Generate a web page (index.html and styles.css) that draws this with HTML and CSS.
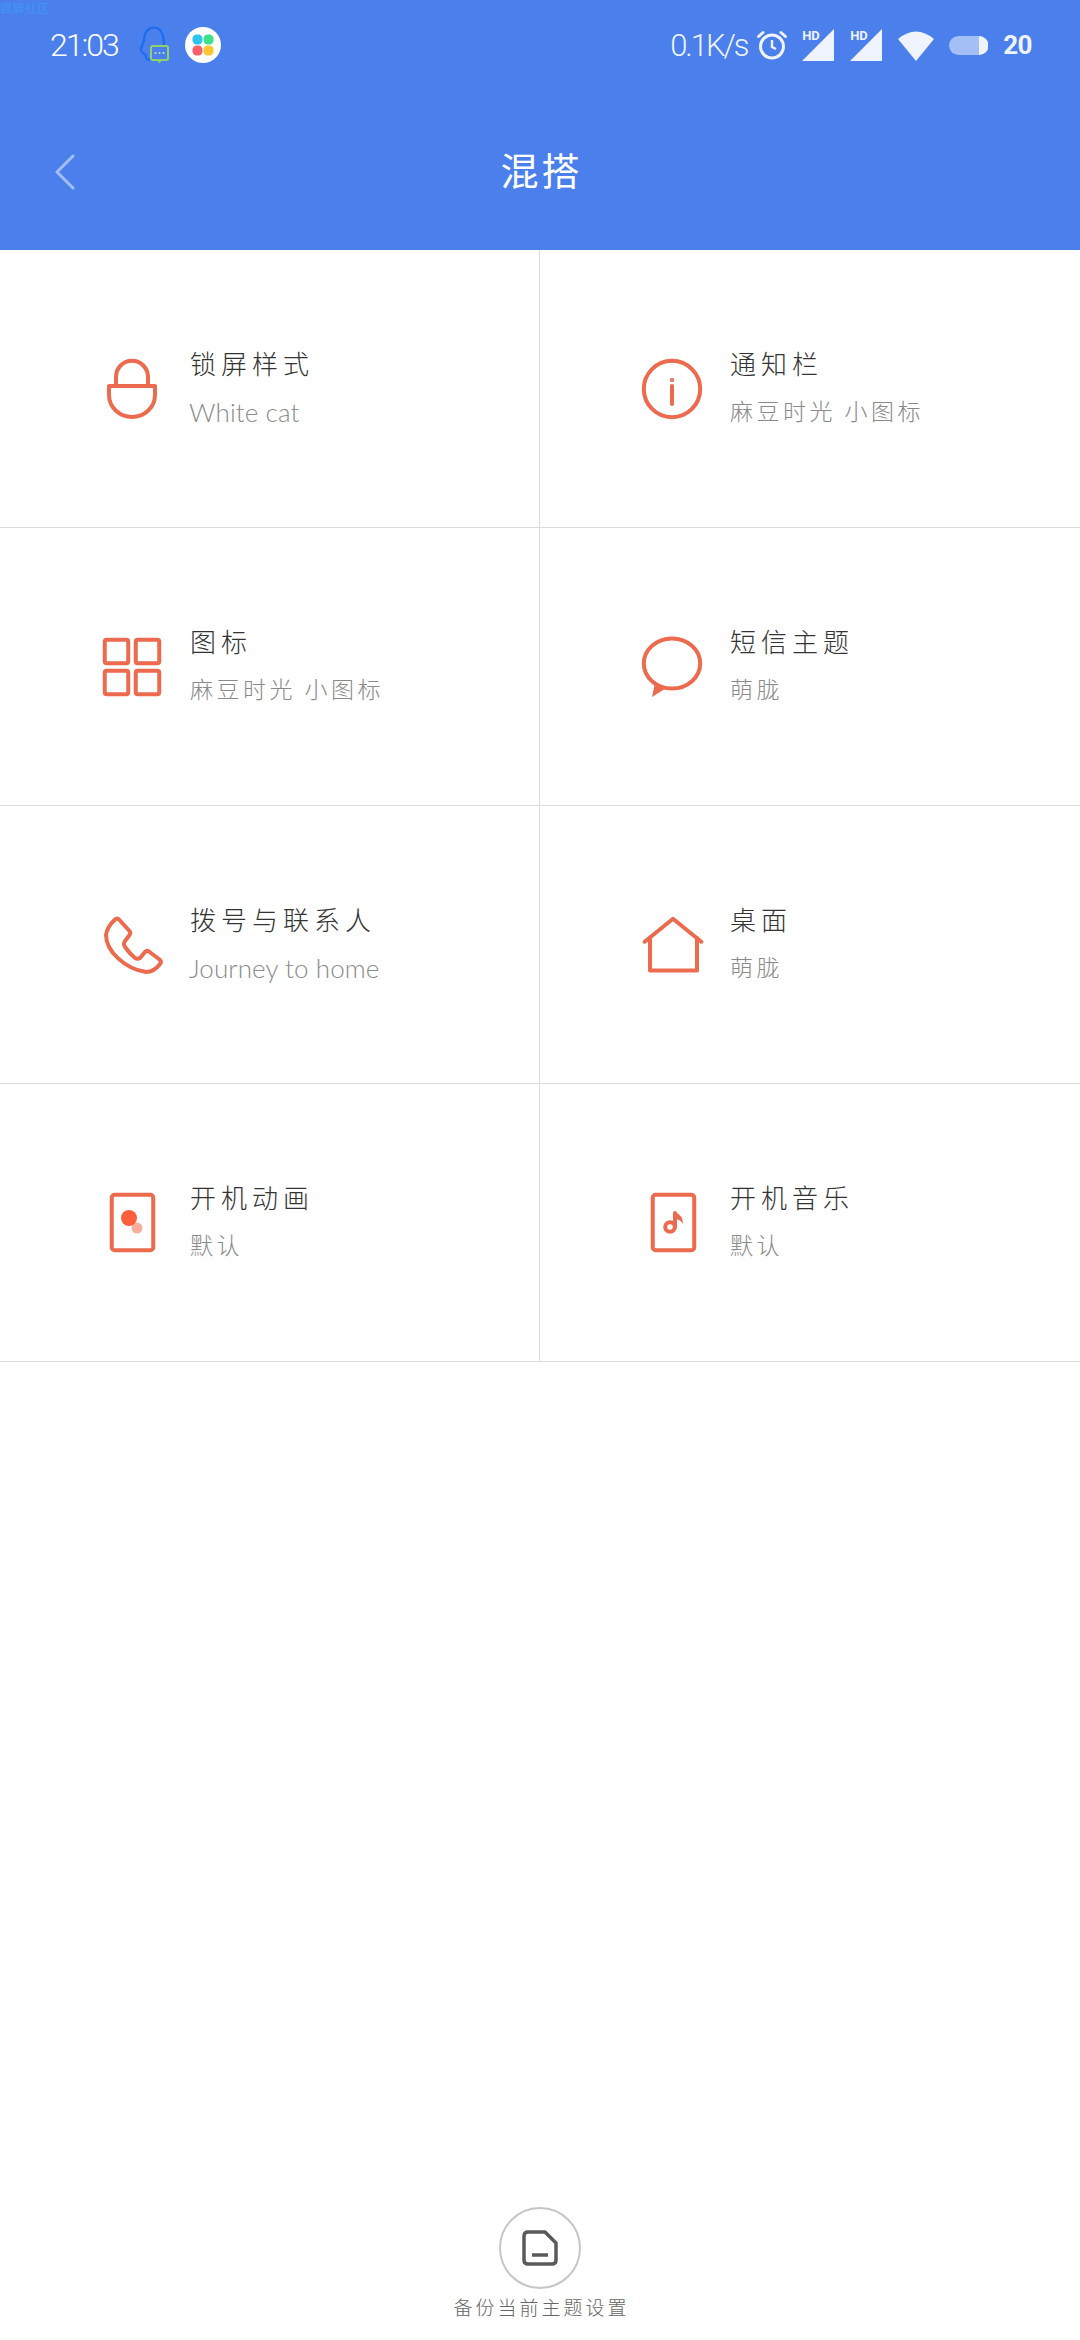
FILE: index.html
```html
<!DOCTYPE html>
<html lang="zh-CN">
<head>
<meta charset="utf-8">
<title>混搭</title>
<link rel="stylesheet" href="styles.css">
</head>
<body>
<div class="app">
  <header class="top">
    <div class="mark">锦屏社区</div>
    <div class="status">
      <div class="status-left">
        <span class="time">21:03</span>
        <svg class="qq" width="32" height="38" viewBox="0 0 32 38"><path d="M12 34C8 34 6 32 7 29C3 27 1 25 2 22C3 19 5 17 5 14C5 6 10 1.500 15 1.500C21 1.500 24 7 25 15V21" fill="none" stroke="#1a6df0" stroke-width="2.200" stroke-linecap="round" stroke-linejoin="round"/><rect x="12" y="20" width="17" height="14" rx="1.500" fill="#4a7fec" stroke="#8fd06a" stroke-width="2"/><path d="M18 34l2.500 3.500 2.500-3.500z" fill="#8fd06a"/><circle cx="16.500" cy="27" r="1.100" fill="#b4e0a8"/><circle cx="20.500" cy="27" r="1.100" fill="#b4e0a8"/><circle cx="24.500" cy="27" r="1.100" fill="#b4e0a8"/></svg>
        <svg class="clover" width="36" height="36" viewBox="0 0 36 36"><circle cx="18" cy="18" r="18" fill="#fff"/><rect x="7.500" y="7.500" width="10" height="10" rx="4.200" fill="#2bc5ee"/><rect x="18.500" y="7.500" width="10" height="10" rx="4.200" fill="#3fe08a"/><rect x="7.500" y="18.500" width="10" height="10" rx="4.200" fill="#f9606a"/><rect x="18.500" y="18.500" width="10" height="10" rx="4.200" fill="#fdc52f"/></svg>
      </div>
      <div class="status-right">
        <span class="speed">0.1K/s</span>
        <svg class="alarm" width="30" height="30" viewBox="0 0 30 30"><circle cx="15" cy="16.500" r="11.500" fill="none" stroke="#eef3fd" stroke-width="3"/><path d="M15 10v7l4 2" fill="none" stroke="#eef3fd" stroke-width="2.400"/><path d="M1.500 6.500L6 2.500M28.500 6.500L24 2.500" stroke="#eef3fd" stroke-width="3" stroke-linecap="round"/></svg>
        <span class="sig"><b class="hd">HD</b><svg width="32" height="32" viewBox="0 0 32 32"><path d="M32 0V32H0z" fill="#eef3fd"/></svg></span>
        <span class="sig"><b class="hd">HD</b><svg width="32" height="32" viewBox="0 0 32 32"><path d="M32 0V32H0z" fill="#eef3fd"/></svg></span>
        <svg class="wifi" width="36" height="31" viewBox="0 0 36 31"><path d="M0 9Q18-6 36 9L18 31z" fill="#eef3fd"/></svg>
        <svg class="batt" width="39" height="19" viewBox="0 0 39 19"><rect width="39" height="19" rx="9.500" fill="#a3bff5"/><path d="M30 0a9.500 9.500 0 0 1 0 19z" fill="#eef3fd"/></svg>
        <span class="level">20</span>
      </div>
    </div>
    <div class="bar">
      <svg class="back" width="22" height="36" viewBox="0 0 22 36"><path d="M19 2L3 18l16 16" fill="none" stroke="#a3bff5" stroke-width="3" stroke-linecap="round" stroke-linejoin="round"/></svg>
      <h1 class="title">混搭</h1>
    </div>
  </header>

  <main class="grid">
    <div class="cell">
      <svg class="ico" viewBox="0 0 64 64"><path d="M16 28V20a16 16.300 0 0 1 32 0v8"/><path d="M9 29H55V38A23 22 0 0 1 9 38Z"/></svg>
      <div class="txt"><div class="name">锁屏样式</div><div class="sub latin">White cat</div></div>
    </div>
    <div class="cell">
      <svg class="ico" viewBox="0 0 64 64"><circle cx="32" cy="32" r="28.200"/><path d="M32 29V47"/><circle class="fill soft" cx="32" cy="23" r="2.300"/></svg>
      <div class="txt"><div class="name">通知栏</div><div class="sub">麻豆时光 小图标</div></div>
    </div>
    <div class="cell">
      <svg class="ico" viewBox="0 0 64 64"><rect x="4.750" y="4.750" width="23.500" height="23.500" rx="2"/><rect x="35.750" y="4.750" width="23.500" height="23.500" rx="2"/><rect x="4.750" y="35.750" width="23.500" height="23.500" rx="2"/><rect x="35.750" y="35.750" width="23.500" height="23.500" rx="2"/></svg>
      <div class="txt"><div class="name">图标</div><div class="sub">麻豆时光 小图标</div></div>
    </div>
    <div class="cell">
      <svg class="ico" viewBox="0 0 64 64"><ellipse cx="32" cy="28.500" rx="28.200" ry="25"/><path class="fill" d="M15 48L12 62L24 54.500Z"/></svg>
      <div class="txt"><div class="name">短信主题</div><div class="sub">萌胧</div></div>
    </div>
    <div class="cell">
      <svg class="ico" viewBox="0 0 64 64"><path d="M15 6.500Q17 4.500 19 6.500L29.500 18Q31 20 29.500 22L25 28Q23 31 25 34Q30 41 35 45Q37.500 46.500 40 45L45 39Q47 37 49 38.500L59.500 46.500Q62 49 60 51Q54 59 46 59C25 56 6 38 6 22Q7 14 15 6.500Z"/></svg>
      <div class="txt"><div class="name">拨号与联系人</div><div class="sub latin">Journey to home</div></div>
    </div>
    <div class="cell">
      <svg class="ico" viewBox="0 0 64 64"><path d="M4.700 28.700L33 5.700L61.300 28.700"/><path d="M10 25V57.500H57V25"/></svg>
      <div class="txt"><div class="name">桌面</div><div class="sub">萌胧</div></div>
    </div>
    <div class="cell">
      <svg class="ico" viewBox="0 0 64 64"><rect x="11.750" y="3.750" width="41.500" height="55.500" rx="3"/><circle class="fill pale" cx="37" cy="37" r="5.500"/><circle class="fill dot" cx="29" cy="27" r="8"/></svg>
      <div class="txt"><div class="name">开机动画</div><div class="sub">默认</div></div>
    </div>
    <div class="cell">
      <svg class="ico" viewBox="0 0 64 64"><rect x="12.750" y="3.750" width="41.500" height="55.500" rx="3"/><circle cx="30" cy="36" r="4.800"/><path d="M35 36V22"/><path class="fill" d="M35 21Q43 24 43 33Q40 28 35 28Z"/></svg>
      <div class="txt"><div class="name">开机音乐</div><div class="sub">默认</div></div>
    </div>
  </main>

  <footer class="foot">
    <div class="round">
      <svg width="36" height="36" viewBox="0 0 36 36"><path d="M6 2H23L34 13V30Q34 34 30 34H6Q2 34 2 30V6Q2 2 6 2Z" fill="none" stroke="#5a5a5a" stroke-width="3.500" stroke-linejoin="round"/><path d="M10 25H26" stroke="#5a5a5a" stroke-width="3.500"/></svg>
    </div>
    <div class="foot-label">备份当前主题设置</div>
  </footer>
</div>
</body>
</html>
```

FILE: styles.css
```css
* { box-sizing: border-box; }
html, body { margin: 0; padding: 0; background: #fff; }
body { font-family: "Noto Sans CJK SC", "Noto Sans", sans-serif; }
.app { width: 1080px; height: 2340px; display: flex; flex-direction: column; overflow: hidden; }

.top { position: relative; height: 250px; background: #4a7fec; color: #fff; flex: none; }
.mark { position: absolute; left: 0; top: 0; font-size: 12px; line-height: 16px; letter-spacing: 0.5px; color: #3f97f5; }
.status { height: 90px; padding: 0 48px 0 50px; display: flex; justify-content: space-between; align-items: center; }
.status-left, .status-right { display: flex; align-items: center; }
.time { font-family: Roboto, sans-serif; font-weight: 300; font-size: 32px; letter-spacing: -2px; line-height: 36px; width: 89px; color: #fff; }
.qq { margin-right: 14px; }
.speed { font-family: Roboto, sans-serif; font-weight: 300; font-size: 31px; letter-spacing: -2px; width: 87px; color: #eef3fd; }
.alarm { margin-right: 15px; }
.sig { position: relative; display: block; width: 32px; height: 32px; margin-right: 16px; }
.sig svg { display: block; }
.hd { position: absolute; left: 0; top: 0; font-family: Roboto, sans-serif; font-size: 13px; line-height: 13px; font-weight: 700; color: #eef3fd; }
.wifi { margin-right: 15px; }
.batt { margin-right: 15px; }
.level { font-family: Roboto, sans-serif; font-weight: 700; font-size: 26px; letter-spacing: -0.5px; color: #eef3fd; }

.bar { height: 160px; display: flex; align-items: center; justify-content: center; position: relative; padding-bottom: 2px; }
.back { position: absolute; left: 54px; top: 64px; }
.title { margin: 0; padding-left: 3px; font-size: 38px; font-weight: 400; letter-spacing: 3px; line-height: 50px; color: #fff; }

.grid { display: grid; grid-template-columns: 540px 540px; grid-auto-rows: 278px; flex: none; }
.cell { display: flex; align-items: center; padding-left: 100px; border-bottom: 1px solid #dcdcdc; }
.cell:nth-child(odd) { border-right: 1px solid #dcdcdc; }
.ico { width: 64px; height: 64px; flex: none; margin-right: 26px; fill: none; stroke: #ec6a4d; stroke-width: 4; stroke-linecap: round; stroke-linejoin: round; }
.ico .fill { fill: #ec6a4d; stroke: none; }
.ico .soft { fill: #e8806a; }
.ico .dot { fill: #fb5f3c; }
.ico .pale { fill: #f9ad9d; }
.txt { display: flex; flex-direction: column; gap: 12.5px; padding-bottom: 4.5px; }
.name { font-size: 26px; line-height: 34px; letter-spacing: 5px; font-weight: 300; color: #333; }
.sub { font-size: 23px; line-height: 34px; letter-spacing: 3.5px; font-weight: 300; color: #8a8a8a; }
.sub.latin { font-family: Lato, sans-serif; font-size: 26px; letter-spacing: 0.1px; height: 34px; line-height: 38px; margin-left: -1px; }

.foot { flex: 1; display: flex; flex-direction: column; align-items: center; justify-content: flex-end; padding-bottom: 21px; }
.round { width: 82px; height: 82px; border-radius: 50%; border: 2px solid #c6c6c6; display: flex; align-items: center; justify-content: center; margin-bottom: 6px; }
.foot-label { padding-left: 3px; font-size: 19px; line-height: 24px; letter-spacing: 3px; font-weight: 300; color: #666; }
```
